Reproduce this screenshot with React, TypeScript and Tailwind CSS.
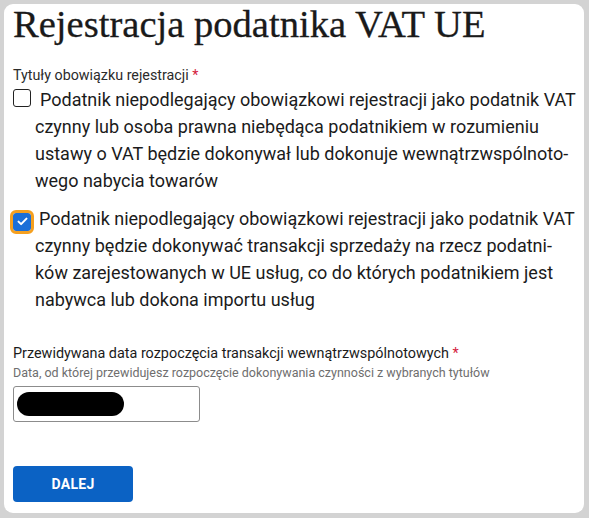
import { useState } from "react";

const roboto = "font-['Roboto','Liberation_Sans',sans-serif]";

const Checkbox = ({ checked, onClick }: { checked: boolean; onClick: () => void }) =>
  checked ? (
    <span
      onClick={onClick}
      className="mr-[8px] inline-flex h-[18px] w-[18px] cursor-pointer items-center justify-center rounded-[3px] bg-[#1b6fd8] align-[-1px] outline-[3px] outline-solid outline-[#f5a020]"
    >
      <svg width="11" height="9" viewBox="0 0 11 9" fill="none">
        <path d="M1.5 4.6 4.1 7.1 9.5 1.6" stroke="white" strokeWidth="2" strokeLinecap="round" strokeLinejoin="round" />
      </svg>
    </span>
  ) : (
    <span
      onClick={onClick}
      className="mr-[9px] inline-block h-[18px] w-[18px] cursor-pointer rounded-[3px] border-[1.5px] border-[#222] bg-white align-[-1px]"
    />
  );

export default function App() {
  const [first, setFirst] = useState(false);
  const [second, setSecond] = useState(true);

  return (
    <div className="min-h-[518px] w-[589px] bg-[#d3d3d3] p-[4px]">
      <div className={`flex h-[509px] w-[580px] flex-col rounded-[9px] bg-white pl-[9px] pt-[1px] ${roboto}`}>
        <h1 className="font-['Liberation_Serif',serif] text-[38.6px] leading-[38px] text-[#1a1a1a] [-webkit-text-stroke:0.3px_#1a1a1a]">
          Rejestracja podatnika VAT UE
        </h1>

        <div className="mt-[22px] text-[14.3px] leading-[20px] text-[#2b2b2b]">
          Tytuły obowiązku rejestracji <span className="text-[#d4213d]">*</span>
        </div>

        <p className="mt-[1px] whitespace-nowrap pl-[22px] -indent-[22px] text-[18px] leading-[27px] text-[#1b1b1b]">
          <Checkbox checked={first} onClick={() => setFirst(!first)} />
          Podatnik niepodlegający obowiązkowi rejestracji jako podatnik VAT
          <br />
          czynny lub osoba prawna niebędąca podatnikiem w rozumieniu
          <br />
          ustawy o VAT będzie dokonywał lub dokonuje wewnątrzwspólnoto-
          <br />
          wego nabycia towarów
        </p>

        <p className="mt-[11px] whitespace-nowrap pl-[22px] -indent-[22px] text-[18px] leading-[27px] text-[#1b1b1b]">
          <Checkbox checked={second} onClick={() => setSecond(!second)} />
          Podatnik niepodlegający obowiązkowi rejestracji jako podatnik VAT
          <br />
          czynny będzie dokonywać transakcji sprzedaży na rzecz podatni-
          <br />
          ków zarejestowanych w UE usług, co do których podatnikiem jest
          <br />
          nabywca lub dokona importu usług
        </p>

        <div className="mt-[30px] text-[14.4px] leading-[22px] text-[#1b1b1b]">
          Przewidywana data rozpoczęcia transakcji wewnątrzwspólnotowych{" "}
          <span className="text-[#d4213d]">*</span>
        </div>
        <div className="text-[12.5px] leading-[16px] text-[#6e6e6e]">
          Data, od której przewidujesz rozpoczęcie dokonywania czynności z wybranych tytułów
        </div>

        <div className="mt-[5px] flex h-[36px] w-[187px] items-center rounded-[3px] border border-[#8c8c8c] px-[3px]">
          <div className="h-[24px] w-[107px] rounded-full bg-black" />
        </div>

        <button className="mt-[44px] h-[36px] w-[120px] rounded-[4px] bg-[#0b62c4] text-[14px] font-bold tracking-[0.3px] text-white">
          DALEJ
        </button>
      </div>
    </div>
  );
}
